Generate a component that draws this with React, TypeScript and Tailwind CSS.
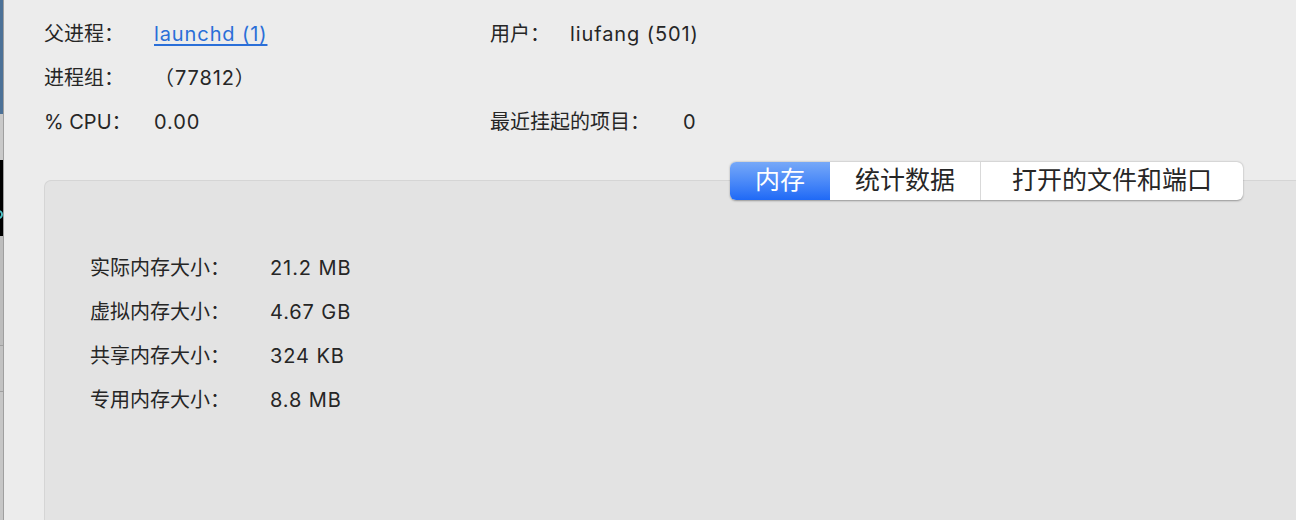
import React from "react";

const font = { fontFamily: 'Inter, "Noto Sans CJK SC", sans-serif' };

function Row({ label, value, labelW }: { label: string; value?: React.ReactNode; labelW: string }) {
  return (
    <div className="flex items-center h-[44px]">
      <div className={labelW}>{label}</div>
      <div className="tracking-[0.9px]">{value}</div>
    </div>
  );
}

export default function App() {
  return (
    <div className="w-[1296px] h-[520px] bg-[#ececec] flex overflow-hidden text-[20px] text-[#262626]" style={font}>
      {/* left window-edge strip */}
      <div className="w-[4px] flex flex-col shrink-0 border-r border-[#9f9f9f]">
        <div className="h-[114px] bg-[#4c7197]" />
        <div className="h-[46px] bg-[#c9c9c9]" />
        <div className="h-[76px] bg-black relative overflow-hidden">
          <div className="absolute left-[-6px] top-[50px] w-[9px] h-[9px] rounded-full border-2 border-[#4ec3c8]" />
        </div>
        <div className="h-[110px] bg-[#bdbdbd] border-b border-[#a0a0a0]" />
        <div className="h-[46px] bg-[#c2c2c2] border-b border-[#a0a0a0]" />
        <div className="flex-1 bg-[#c6c6c6]" />
      </div>

      <div className="flex-1 flex flex-col pl-[40px] pt-[12px]">
        <div className="flex">
          <div className="w-[446px]">
            <Row label="父进程：" labelW="w-[110px]" value={<span className="text-[#2a6fd8] underline underline-offset-[3px]">launchd (1)</span>} />
            <Row label="进程组：" labelW="w-[110px]" value="（77812）" />
            <Row label="% CPU：" labelW="w-[110px]" value="0.00" />
          </div>
          <div>
            <Row label="用户：" labelW="w-[80px]" value="liufang (501)" />
            <div className="h-[44px]" />
            <Row label="最近挂起的项目：" labelW="w-[193px]" value="0" />
          </div>
        </div>

        <div className="relative mt-[36px] flex-1 bg-[#e3e3e3] border-t border-l border-[#d5d5d5] rounded-tl-[7px] pl-[45px] pt-[65px]">
          <div className="absolute left-[685px] top-[-19px] h-[38px] w-[513px] flex rounded-[6px] bg-white shadow-[0_0.5px_2px_rgba(0,0,0,0.35)] overflow-hidden text-[25px]">
            <div className="w-[100px] flex items-center justify-center text-white bg-gradient-to-b from-[#76a8f8] to-[#1e69f6]">内存</div>
            <div className="w-[151px] flex items-center justify-center border-r border-[#d9d9d9] text-[#262626]">统计数据</div>
            <div className="flex-1 flex items-center justify-center text-[#262626]">打开的文件和端口</div>
          </div>
          <Row label="实际内存大小：" labelW="w-[180px]" value="21.2 MB" />
          <Row label="虚拟内存大小：" labelW="w-[180px]" value="4.67 GB" />
          <Row label="共享内存大小：" labelW="w-[180px]" value="324 KB" />
          <Row label="专用内存大小：" labelW="w-[180px]" value="8.8 MB" />
        </div>
      </div>
    </div>
  );
}
